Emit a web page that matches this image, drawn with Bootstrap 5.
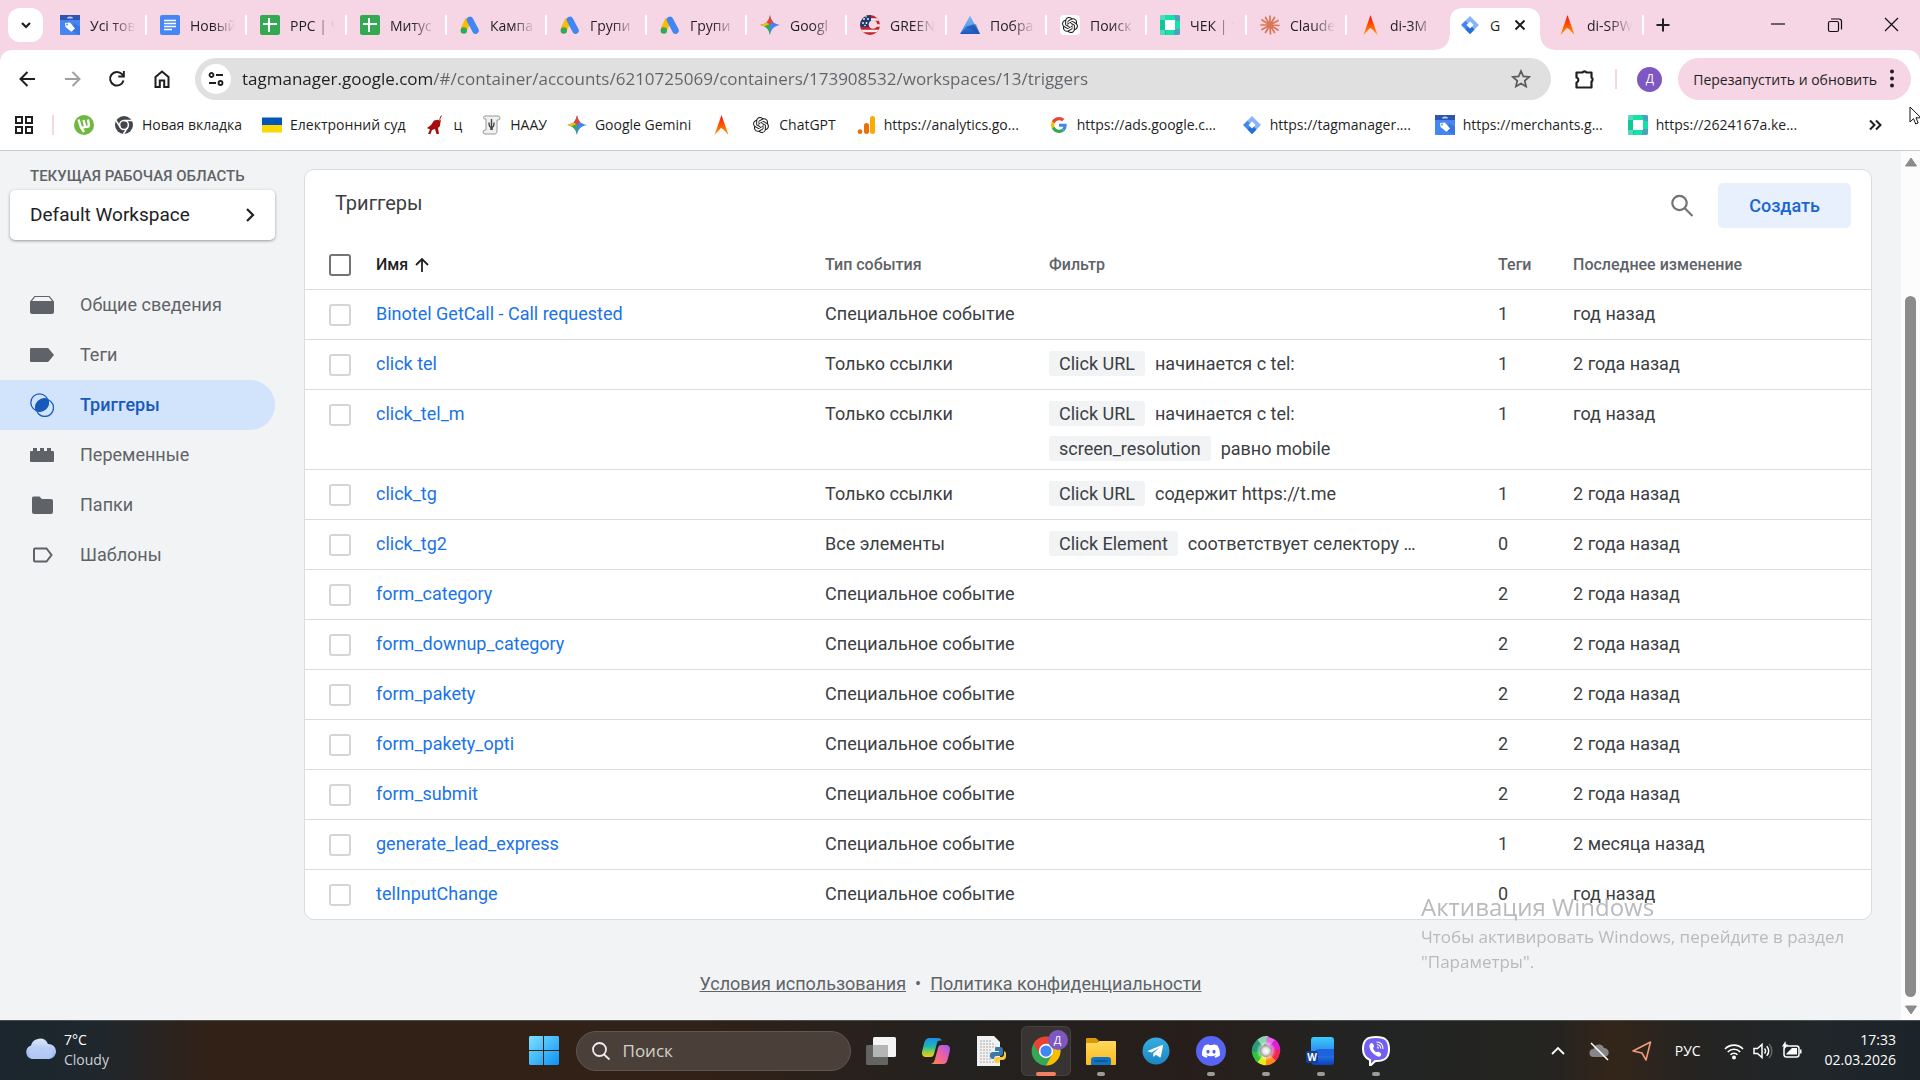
<!DOCTYPE html>
<html lang="ru">
<head>
<meta charset="utf-8">
<meta name="viewport" content="width=device-width, initial-scale=1">
<title>Google Tag Manager</title>
<link href="https://cdn.jsdelivr.net/npm/bootstrap@5.3.0/dist/css/bootstrap.min.css" rel="stylesheet">
<style>
  :root { --strip: #f6d5e4; --ink: #1f1f1f; --line: #dadce0; --muted: #5f6368; --link: #1a73e8; --gtm-bg: #f1f3f4; }
  body { font-family: Roboto, "Noto Sans", sans-serif; background: var(--gtm-bg); color: #3c4043; }
  svg { display: block; flex: none; }
  .ui-font { font-family: "Open Sans", "Noto Sans", sans-serif; }
  .i12 { width: 12px; height: 12px; } .i16 { width: 16px; height: 16px; } .i20 { width: 20px; height: 20px; }
  .i24 { width: 24px; height: 24px; } .i30 { width: 30px; height: 30px; }
  button.plain { background: none; border: 0; padding: 0; color: inherit; display: flex; align-items: center; justify-content: center; }

  /* tab strip */
  .tab-strip { background: var(--strip); height: 50px; padding-left: 8px; color: var(--ink); font-size: 14px; }
  button.tab-search { width: 35px; height: 34px; background: #fff; border-radius: 12px; margin-right: 7px; }
  .btab { width: 100px; height: 42px; padding: 0 15px 8px 10px; gap: 10px; position: relative; color: var(--ink); text-decoration: none; margin-top: 8px; min-width: 0; }
  .btab .cap { overflow: hidden; white-space: nowrap; flex: 1; -webkit-mask-image: linear-gradient(to right, #000 50%, transparent); mask-image: linear-gradient(to right, #000 50%, transparent); }
  .btab.sep::after { content: ""; position: absolute; right: 3px; top: 7px; width: 2px; height: 20px; background: #fff; border-radius: 1px; }
  .btab.current { width: 90px; background: #fff; border-radius: 12px 12px 0 0; margin-right: 7px; padding-right: 14px; }
  .btab.current::before, .btab.current::after { content: ""; position: absolute; bottom: 0; width: 14px; height: 14px; }
  .btab.current::before { left: -14px; background: radial-gradient(circle at 0 0, transparent 13px, #fff 14px); }
  .btab.current::after { right: -14px; background: radial-gradient(circle at 100% 0, transparent 13px, #fff 14px); }
  .btab.current .cap { -webkit-mask-image: none; mask-image: none; }
  .win-keys { gap: 37px; padding-right: 18px; }

  /* toolbar */
  .toolbar-wrap { background: var(--strip); }
  .toolbar { background: #fff; border-radius: 12px 12px 0 0; height: 58px; padding: 0 9px 0 17px; color: var(--ink); }
  .nav-keys { gap: 25px; margin-right: 23px; }
  .omnibox { background: #e0e0e0; border-radius: 21px; height: 42px; padding: 0 20px 0 6px; gap: 11px; }
  button.site-info { width: 30px; height: 30px; background: #fff; border-radius: 50%; }
  .url-box { border: 0; outline: 0; font-size: 17px; padding: 0; min-width: 0; color: var(--muted); -webkit-text-fill-color: transparent; background: linear-gradient(to right, #1f1f1f 190px, #5f6368 190px); -webkit-background-clip: text; background-clip: text; }
  .vline { width: 2px; height: 20px; background: var(--strip); }
  .avatar { width: 25px; height: 25px; border-radius: 50%; background: #7e57c2; color: #fff; font-size: 12px; }
  button.update-pill { background: var(--strip); border-radius: 21px; height: 42px; padding: 0 11px 0 15px; gap: 7px; font-size: 14px; }

  /* bookmarks */
  .bookmarks { background: #fff; height: 43px; padding: 0 37px 9px 14px; gap: 20px; border-bottom: 1px solid #c9cbcf; font-size: 14px; }
  .bm-lead { gap: 18px; }
  .bookmarks a { color: var(--ink); text-decoration: none; display: flex; align-items: center; gap: 8px; white-space: nowrap; }
  .bookmarks a.long span { width: 145px; }

  /* workspace side panel */
  .side { width: 304px; padding: 13px 29px 0 0; flex: none; }
  .side-label { font-size: 15px; font-weight: 500; color: var(--muted); line-height: 24px; padding-left: 30px; }
  button.ws-pick { width: 265px; height: 50px; margin: 2px 0 0 10px; padding: 0 18px 0 20px; background: #fff; border-radius: 5px; box-shadow: 0 1px 3px rgba(60,64,67,.5); color: #202124; font-size: 19px; justify-content: space-between; }
  .side-nav { margin-top: 40px; }
  .side-nav a { height: 50px; padding-left: 30px; gap: 26px; color: var(--muted); text-decoration: none; font-size: 18px; border-radius: 0 25px 25px 0; }
  .side-nav a span { padding-bottom: 2px; }
  .side-nav a.on { background: #d2e3fc; color: #185abc; font-weight: 500; }

  /* trigger table */
  .trig-card { border: 1px solid var(--line); border-radius: 10px; background: #fff; margin: 18px 29px 0 0; }
  .trig-head { height: 71px; padding: 0 20px 0 30px; }
  .trig-head h1 { font-size: 20px; font-weight: 400; color: #3c4043; margin: 0; padding-bottom: 6px; }
  button.make { background: #e8f0fe; color: #1967d2; border: 0; border-radius: 5px; width: 133px; height: 45px; font-size: 18px; font-weight: 500; }
  .trig-table { table-layout: fixed; width: 100%; font-size: 18px; }
  .trig-table th { font-size: 16px; font-weight: 500; color: var(--muted); height: 48px; padding: 0; vertical-align: middle; }
  .trig-table th.lead-col { color: #202124; }
  .sort-cap { gap: 6px; }
  .trig-table td { border-top: 1px solid var(--line); height: 50px; padding: 11px 0 8px; vertical-align: top; line-height: 25px; white-space: nowrap; }
  .trig-table td a { color: var(--link); text-decoration: none; }
  .c-box { width: 71px; } .c-type { width: 224px; } .c-tags { width: 75px; } .c-last { width: 298px; }
  .tick { appearance: none; display: block; width: 22px; height: 22px; border: 2px solid #d5d5d5; border-radius: 3px; background: #fff; margin: 3px 0 0 24px; }
  th .tick { border-color: #737373; margin-top: 0; }
  .cond { display: flex; gap: 10px; }
  .cond + .cond { margin-top: 10px; }
  .chip { background: var(--gtm-bg); border-radius: 3px; padding: 0 10px; }
  .legal { margin-top: 50px; font-size: 18px; color: var(--muted); gap: 9px; }
  .legal a { color: var(--muted); }
  .scroller { width: 19px; background: #fcfcfc; flex: none; padding: 6px 0 5px; }
  .thumb { width: 11px; border-radius: 6px; background: #8b8b8b; margin-top: 129px; margin-bottom: 8px; }

  /* overlays */
  .activation { position: fixed; right: 59px; bottom: 106px; width: 440px; color: #b9babb; font-size: 17px; line-height: 25px; white-space: nowrap; pointer-events: none; }
  .activation .big { font-size: 24px; line-height: 34px; }
  .pointer { position: fixed; left: 1909px; top: 106px; }

  /* taskbar */
  .taskbar { height: 60px; color: #fff; border-top: 1px solid #4a4f50; font-size: 14px; line-height: 20px;
    background: linear-gradient(to right, #1b262e 0, #1f272d 5%, #322116 11%, #322116 36%, #2a211c 43%, #23211f 50%, #271e1b 62%, #222524 72%, #252420 81%, #342519 84%, #252422 88%, #20262a 95%, #1c242a 100%); }
  .tb-side { flex: 1 1 0; }
  .two-line { padding-bottom: 2px; }
  .wx { color: #cdd0d2; }
  .tray { gap: 23px; padding-right: 24px; }
  .tray-icons { gap: 9px; }
  .tb-app { width: 55px; height: 58px; position: relative; }
  .tb-app.run::after { content: ""; position: absolute; bottom: 4px; width: 8px; height: 4px; border-radius: 2px; background: #9b9b9b; }
  .tb-app.front::before { content: ""; position: absolute; width: 50px; height: 50px; border-radius: 6px; background: rgba(255,255,255,.09); border: 1px solid rgba(255,255,255,.07); }
  .tb-app.front::after { width: 20px; background: #f28163; }
  .tb-app svg { position: relative; }
  .app-badge { position: absolute; right: 6px; top: 8px; width: 20px; height: 20px; font-size: 11px; background: #7e57c2; }
  .tb-search { width: 275px; height: 40px; border-radius: 20px; background: #4b4039; border: 1px solid #62564f; padding-left: 14px; gap: 12px; margin: 0 3px 0 4px; }
  .tb-search input { background: none; border: 0; outline: 0; color: #ddd; font-size: 17px; width: 200px; padding: 0; }
  .tb-search input::placeholder { color: #d5d0cd; opacity: 1; }
</style>
<script src="https://cdn.jsdelivr.net/npm/bootstrap@5.3.0/dist/js/bootstrap.bundle.min.js"></script>
</head>
<body class="vh-100 d-flex flex-column overflow-hidden">

<svg width="0" height="0" class="position-absolute" aria-hidden="true">
  <defs>
    <linearGradient id="gA" x1="0" y1="1" x2="0" y2="0"><stop offset="0" stop-color="#ff9a00"/><stop offset=".45" stop-color="#ff5a00"/><stop offset="1" stop-color="#fb1010"/></linearGradient>
    <linearGradient id="gTri" x1="0" y1="0" x2="0" y2="1"><stop offset="0" stop-color="#5aa7ee"/><stop offset="1" stop-color="#1b55c0"/></linearGradient>
    <linearGradient id="gWin" x1="0" y1="0" x2="1" y2="1"><stop offset="0" stop-color="#7fe0ff"/><stop offset="1" stop-color="#0a92f5"/></linearGradient>
    <linearGradient id="gCloud" x1="0" y1="0" x2="0" y2="1"><stop offset="0" stop-color="#dbe7fb"/><stop offset="1" stop-color="#8fb0ee"/></linearGradient>
    <linearGradient id="gCop1" x1="0" y1="0" x2="0" y2="1"><stop offset="0" stop-color="#1b8fe8"/><stop offset=".45" stop-color="#20b6b0"/><stop offset=".75" stop-color="#9bd03c"/><stop offset="1" stop-color="#f7c51c"/></linearGradient>
    <linearGradient id="gCop2" x1="1" y1="0" x2="0" y2="1"><stop offset="0" stop-color="#9a5df5"/><stop offset=".5" stop-color="#f0609c"/><stop offset="1" stop-color="#fb8a4e"/></linearGradient>
    <linearGradient id="gFold" x1="0" y1="0" x2="0" y2="1"><stop offset="0" stop-color="#ffd85e"/><stop offset="1" stop-color="#fbb91c"/></linearGradient>
    <linearGradient id="gTg" x1="0" y1="0" x2="0" y2="1"><stop offset="0" stop-color="#35aee2"/><stop offset="1" stop-color="#1b86c4"/></linearGradient>
    <linearGradient id="gWord" x1="0" y1="0" x2="0" y2="1"><stop offset="0" stop-color="#3ccbfb"/><stop offset=".5" stop-color="#2f8ff0"/><stop offset="1" stop-color="#0c3fc0"/></linearGradient>
    <radialGradient id="gGlow"><stop offset="0" stop-color="#fff"/><stop offset=".3" stop-color="#fff" stop-opacity=".9"/><stop offset="1" stop-color="#fff" stop-opacity="0"/></radialGradient>
    <clipPath id="cStar"><path d="M10 0C11 6 14 9 20 10C14 11 11 14 10 20C9 14 6 11 0 10C6 9 9 6 10 0Z"/></clipPath>
    <clipPath id="cDisc"><circle cx="10" cy="10" r="10"/></clipPath>
  </defs>
  <symbol id="merchant" viewBox="0 0 20 20"><rect width="20" height="20" rx="1" fill="#4486f4"/><rect width="20" height="5" fill="#3154b0"/><path d="M7 3.500a3 2 0 0 1 6 0z" fill="#b9cdf8"/><path d="M12 16l8 4v-8l-6-4z" fill="#3a74e0"/><path d="M5 8l5-.6 5 6-3.600 3.400L5.500 12z" fill="#fff"/><circle cx="7" cy="9.500" r=".9" fill="#4486f4"/></symbol>
  <symbol id="docs" viewBox="0 0 20 20"><rect width="20" height="20" rx="2" fill="#4486f4"/><path d="M4 5.500h12M4 8.500h12M4 11.500h12M4 14.500h8" stroke="#fff" stroke-width="1.600"/></symbol>
  <symbol id="sheets" viewBox="0 0 20 20"><rect width="20" height="20" rx="2" fill="#34a853"/><path d="M9 3v14M3 9h14" stroke="#fff" stroke-width="2"/></symbol>
  <symbol id="ads" viewBox="0 0 20 20"><path d="M8.500 4.500L4 14" stroke="#fbbc04" stroke-width="6.500"/><path d="M10 5l5.500 10.500" stroke="#4285f4" stroke-width="6.600" stroke-linecap="round"/><circle cx="3.800" cy="15.500" r="3.200" fill="#34a853"/></symbol>
  <symbol id="gem" viewBox="0 0 20 20"><g clip-path="url(#cStar)"><rect width="20" height="20" fill="#4285f4"/><path d="M0 0h20L10 10z" fill="#ea4335"/><path d="M0 2l10 8L0 14z" fill="#fbbc04"/><path d="M0 13l10-4v11H0z" fill="#34a853"/></g></symbol>
  <symbol id="usa" viewBox="0 0 20 20"><g clip-path="url(#cDisc)"><rect width="20" height="20" fill="#c8202f"/><path d="M0 4.500h20M0 10.500h20M0 16h20" stroke="#f5ecec" stroke-width="2.600"/><rect width="11" height="12" fill="#1e3a6e"/><circle cx="13" cy="9.500" r="4.300" fill="#f6d5e4"/></g><g fill="#fff"><circle cx="4" cy="4" r=".9"/><circle cx="8" cy="4" r=".9"/><circle cx="3" cy="8" r=".9"/><circle cx="6.500" cy="8" r=".9"/><circle cx="6" cy="1.800" r=".7"/><circle cx="5" cy="10.500" r=".8"/></g></symbol>
  <symbol id="tri" viewBox="0 0 20 20"><path d="M10 1l10 18H0z" fill="url(#gTri)"/><path d="M10 1l4.500 8-8 2.500L0 19z" fill="#7fc1f6" opacity=".55"/><path d="M6 12l10-3 4 10z" fill="#1348ab" opacity=".5"/></symbol>
  <symbol id="knot" viewBox="0 0 24 24"><path fill="#222" d="M22.2819 9.8211a5.9847 5.9847 0 0 0-.5157-4.9108 6.0462 6.0462 0 0 0-6.5098-2.9A6.0651 6.0651 0 0 0 4.9807 4.1818a5.9847 5.9847 0 0 0-3.9977 2.9 6.0462 6.0462 0 0 0 .7427 7.0966 5.98 5.98 0 0 0 .511 4.9107 6.051 6.051 0 0 0 6.5146 2.9001A5.9847 5.9847 0 0 0 13.2599 24a6.0557 6.0557 0 0 0 5.7718-4.2058 5.9894 5.9894 0 0 0 3.9977-2.9001 6.0557 6.0557 0 0 0-.7475-7.0729zm-9.022 12.6081a4.4755 4.4755 0 0 1-2.8764-1.0408l.1419-.0804 4.7783-2.7582a.7948.7948 0 0 0 .3927-.6813v-6.7369l2.02 1.1686a.071.071 0 0 1 .038.052v5.5826a4.504 4.504 0 0 1-4.4945 4.4944zm-9.6607-4.1254a4.4708 4.4708 0 0 1-.5346-3.0137l.142.0852 4.783 2.7582a.7712.7712 0 0 0 .7806 0l5.8428-3.3685v2.3324a.0804.0804 0 0 1-.0332.0615L9.74 19.9502a4.4992 4.4992 0 0 1-6.1408-1.6464zM2.3408 7.8956a4.485 4.485 0 0 1 2.3655-1.9728V11.6a.7664.7664 0 0 0 .3879.6765l5.8144 3.3543-2.0201 1.1685a.0757.0757 0 0 1-.071 0l-4.8303-2.7865A4.504 4.504 0 0 1 2.3408 7.872zm16.5963 3.8558L13.1038 8.364 15.1192 7.2a.0757.0757 0 0 1 .071 0l4.8303 2.7913a4.4944 4.4944 0 0 1-.6765 8.1042v-5.6772a.79.79 0 0 0-.407-.667zm2.0107-3.0231l-.142-.0852-4.7735-2.7818a.7759.7759 0 0 0-.7854 0L9.409 9.2297V6.8974a.0662.0662 0 0 1 .0284-.0615l4.8303-2.7866a4.4992 4.4992 0 0 1 6.6802 4.66zM8.3065 12.863l-2.02-1.1638a.0804.0804 0 0 1-.038-.0567V6.0742a4.4992 4.4992 0 0 1 7.3757-3.4537l-.142.0805L8.704 5.459a.7948.7948 0 0 0-.3927.6813zm1.0976-2.3654l2.602-1.4998 2.6069 1.4998v2.9994l-2.5974 1.4997-2.6067-1.4997Z"/></symbol>
  <symbol id="keto" viewBox="0 0 20 20"><rect width="20" height="20" rx="2" fill="#13e3a4"/><path d="M0 14v4a2 2 0 0 0 2 2h4V6l-6-2z" fill="#10c79a"/><path d="M14 0h4a2 2 0 0 1 2 2v4H16zM14 14h6v4a2 2 0 0 1-2 2h-4z" fill="#4f9fc0"/><path d="M0 2a2 2 0 0 1 2-2h3v5H0zM0 15h5v5H2a2 2 0 0 1-2-2z" fill="#55d8c2"/><rect x="5" y="5" width="10" height="10" fill="#fff"/></symbol>
  <symbol id="claude" viewBox="0 0 20 20"><path stroke="#d97757" stroke-width="1.700" stroke-linecap="round" d="M10 10V1M10 10l4.500-7.500M10 10l8-4.500M10 10l9 .5M10 10l8 5M10 10l4.500 7.500M10 10l.5 9M10 10l-4.500 7.500M10 10l-8 4.500M10 10H1M10 10L2 5M10 10L5.500 2.500"/></symbol>
  <symbol id="arrowA" viewBox="0 0 20 20"><path d="M10.500 0L17.500 20l-5-5.500-2.500-1.500-6.500 7z" fill="url(#gA)"/></symbol>
  <symbol id="gtm" viewBox="0 0 20 20"><path d="M10 1l9 9-4.500 4.500-9-9z" fill="#8ab4f8"/><path d="M5.500 5.500L1 10l9 9 4.500-4.500L10 10z" fill="#4285f4"/><path d="M5.500 14.500L10 19l4.500-4.500L10 10z" fill="#246fdb"/><path d="M10 6.500l3.500 3.500-3.500 3.500L6.500 10z" fill="#fff"/></symbol>
  <symbol id="gLogo" viewBox="0 0 48 48"><path fill="#EA4335" d="M24 9.500c3.540 0 6.710 1.220 9.210 3.600l6.850-6.850C35.900 2.380 30.470 0 24 0 14.620 0 6.510 5.380 2.560 13.220l7.980 6.190C12.430 13.720 17.740 9.500 24 9.500z"/><path fill="#4285F4" d="M46.980 24.550c0-1.570-.15-3.090-.38-4.550H24v9.020h12.940c-.58 2.960-2.260 5.480-4.780 7.180l7.730 6c4.510-4.180 7.090-10.360 7.090-17.650z"/><path fill="#FBBC05" d="M10.530 28.590c-.48-1.450-.76-2.990-.76-4.590s.27-3.140.76-4.590l-7.980-6.190C.92 16.460 0 20.120 0 24c0 3.880.92 7.540 2.560 10.780l7.970-6.190z"/><path fill="#34A853" d="M24 48c6.480 0 11.930-2.130 15.890-5.810l-7.730-6c-2.150 1.450-4.920 2.300-8.160 2.300-6.260 0-11.570-4.220-13.470-9.910l-7.980 6.190C6.510 42.620 14.620 48 24 48z"/></symbol>
</svg>

<header class="ui-font">
  <div class="tab-strip d-flex align-items-center">
    <button class="plain tab-search" aria-label="Поиск вкладок"><svg class="i12" viewBox="0 0 12 12"><path d="M2 4l4 4 4-4" fill="none" stroke="#1f1f1f" stroke-width="2.200"/></svg></button>
    <nav class="d-flex" aria-label="Вкладки">
      <a href="#" class="btab sep d-flex align-items-center"><svg class="i20"><use href="#merchant"/></svg><span class="cap">Усі тов</span></a>
      <a href="#" class="btab sep d-flex align-items-center"><svg class="i20"><use href="#docs"/></svg><span class="cap">Новый</span></a>
      <a href="#" class="btab sep d-flex align-items-center"><svg class="i20"><use href="#sheets"/></svg><span class="cap">PPC | Ч</span></a>
      <a href="#" class="btab sep d-flex align-items-center"><svg class="i20"><use href="#sheets"/></svg><span class="cap">Митус</span></a>
      <a href="#" class="btab sep d-flex align-items-center"><svg class="i20"><use href="#ads"/></svg><span class="cap">Кампа</span></a>
      <a href="#" class="btab sep d-flex align-items-center"><svg class="i20"><use href="#ads"/></svg><span class="cap">Групи</span></a>
      <a href="#" class="btab sep d-flex align-items-center"><svg class="i20"><use href="#ads"/></svg><span class="cap">Групи</span></a>
      <a href="#" class="btab sep d-flex align-items-center"><svg class="i20"><use href="#gem"/></svg><span class="cap">Googl</span></a>
      <a href="#" class="btab sep d-flex align-items-center"><svg class="i20"><use href="#usa"/></svg><span class="cap">GREEN</span></a>
      <a href="#" class="btab sep d-flex align-items-center"><svg class="i20"><use href="#tri"/></svg><span class="cap">Побра</span></a>
      <a href="#" class="btab sep d-flex align-items-center"><svg class="i20" viewBox="0 0 20 20"><rect width="20" height="20" rx="4" fill="#fff"/><use href="#knot" x="2" y="2" width="16" height="16"/></svg><span class="cap">Поиск</span></a>
      <a href="#" class="btab sep d-flex align-items-center"><svg class="i20"><use href="#keto"/></svg><span class="cap">ЧЕК | 1</span></a>
      <a href="#" class="btab sep d-flex align-items-center"><svg class="i20"><use href="#claude"/></svg><span class="cap">Claude</span></a>
      <a href="#" class="btab d-flex align-items-center"><svg class="i20"><use href="#arrowA"/></svg><span class="cap">di-3M</span></a>
      <a href="#" class="btab current d-flex align-items-center" aria-current="page"><svg class="i20"><use href="#gtm"/></svg><span class="cap">G</span><svg class="i12" viewBox="0 0 12 12"><path d="M1.500 1.500l9 9M10.500 1.500l-9 9" stroke="#1f1f1f" stroke-width="2"/></svg></a>
      <a href="#" class="btab sep d-flex align-items-center"><svg class="i20"><use href="#arrowA"/></svg><span class="cap">di-SPW</span></a>
    </nav>
    <button class="plain ms-2" aria-label="Новая вкладка"><svg class="i16" viewBox="0 0 16 16"><path d="M8 1.500v13M1.500 8h13" stroke="#1f1f1f" stroke-width="2"/></svg></button>
    <div class="win-keys d-flex ms-auto">
      <button class="plain" aria-label="Свернуть"><svg class="i20" viewBox="0 0 20 20"><path d="M3 9h14" stroke="#111" stroke-width="1.200"/></svg></button>
      <button class="plain" aria-label="Развернуть"><svg class="i20" viewBox="0 0 20 20" fill="none" stroke="#111" stroke-width="1.200"><rect x="3.500" y="6.500" width="10" height="10" rx="1.500"/><path d="M6 4h8a2.500 2.500 0 0 1 2.500 2.500v8"/></svg></button>
      <button class="plain" aria-label="Закрыть"><svg class="i20" viewBox="0 0 20 20"><path d="M3 3l13 13M16 3L3 16" stroke="#111" stroke-width="1.200"/></svg></button>
    </div>
  </div>

  <div class="toolbar-wrap">
    <div class="toolbar d-flex align-items-center">
      <div class="nav-keys d-flex">
        <button class="plain" aria-label="Назад"><svg class="i20" viewBox="0 0 20 20"><path d="M18 10H4M10.500 3L3.500 10l7 7" fill="none" stroke="#1f1f1f" stroke-width="2"/></svg></button>
        <button class="plain" aria-label="Вперёд"><svg class="i20" viewBox="0 0 20 20"><path d="M3 10h14M10.500 3l7 7-7 7" fill="none" stroke="#a0a0a0" stroke-width="2"/></svg></button>
        <button class="plain" aria-label="Обновить"><svg class="i20" viewBox="0 0 20 20"><path d="M16.500 11.500A6.800 6.800 0 1 1 15 5.200L17 7.500" fill="none" stroke="#1f1f1f" stroke-width="2"/><path d="M17.800 2v6.500h-6.500V6.600h4.600V2z" fill="#1f1f1f"/></svg></button>
        <button class="plain" aria-label="Главная"><svg class="i20" viewBox="0 0 20 20"><path d="M3.500 18V8L10 2.500 16.500 8v10h-4.300v-6.500H7.800V18z" fill="none" stroke="#1f1f1f" stroke-width="2"/></svg></button>
      </div>
      <div class="omnibox d-flex align-items-center flex-grow-1">
        <button class="plain site-info" aria-label="Сведения о сайте"><svg class="i16" viewBox="0 0 16 16" fill="none" stroke="#1f1f1f" stroke-width="1.800"><circle cx="3.500" cy="4" r="2"/><path d="M8 4h7M1 12h7"/><circle cx="12.500" cy="12" r="2"/></svg></button>
        <input class="url-box flex-grow-1 ui-font" type="text" aria-label="Адресная строка" value="tagmanager.google.com/#/container/accounts/6210725069/containers/173908532/workspaces/13/triggers">
        <button class="plain" aria-label="Добавить в закладки"><svg class="i20" viewBox="0 0 20 20"><path d="M10 2l2.300 5.400 5.900.5-4.500 3.900 1.400 5.700-5.100-3-5.100 3 1.400-5.700L1.800 7.900l5.900-.5z" fill="none" stroke="#5a5a5a" stroke-width="1.700"/></svg></button>
      </div>
      <div class="d-flex align-items-center ms-4 gap-3">
        <button class="plain" aria-label="Расширения"><svg class="i20" viewBox="0 0 20 20"><path d="M1.500 3.500h6a2.200 1.800 0 0 1 4 0h5v5a1.900 2.200 0 0 1 0 4v6h-15v-5a2.600 2.600 0 0 0 0-5z" fill="none" stroke="#1f1f1f" stroke-width="2.200" stroke-linejoin="round"/></svg></button>
        <span class="vline ms-1"></span>
        <span class="avatar d-flex align-items-center justify-content-center ms-1">Д</span>
        <button class="plain update-pill">Перезапустить и обновить <svg width="16" height="24" viewBox="0 0 16 24" fill="#1f1f1f"><circle cx="8" cy="4.500" r="2"/><circle cx="8" cy="11.500" r="2"/><circle cx="8" cy="18.500" r="2"/></svg></button>
      </div>
    </div>
  </div>

  <nav class="bookmarks d-flex align-items-center" aria-label="Закладки">
    <div class="bm-lead d-flex align-items-center">
      <button class="plain" aria-label="Все закладки"><svg class="i20" viewBox="0 0 20 20" fill="none" stroke="#1f1f1f" stroke-width="2"><rect x="2" y="2" width="6" height="6"/><rect x="12" y="2" width="6" height="6"/><rect x="2" y="12" width="6" height="6"/><rect x="12" y="12" width="6" height="6"/></svg></button>
      <span class="vline"></span>
    </div>
    <a href="#" aria-label="uTorrent"><svg class="i20" viewBox="0 0 20 20"><circle cx="10" cy="10" r="10" fill="#6fb83f"/><path d="M4.500 4.500l2 6.500c.6 2 4 2.200 4.500 0l-1.500-6M11 11c.8 1.600 3.500 1 4-.5l-1-6M6.500 11.500L10 17" fill="none" stroke="#fff" stroke-width="2.400"/></svg></a>
    <a href="#"><svg class="i20" viewBox="0 0 20 20"><circle cx="10" cy="10" r="9" fill="#43474b"/><circle cx="10" cy="10" r="4.400" fill="none" stroke="#fff" stroke-width="1.500"/><path d="M10 5.600h8.300M6.200 12.200L2 5.500M13.800 12.200L9.500 19" stroke="#fff" stroke-width="1.500"/></svg><span>Новая вкладка</span></a>
    <a href="#"><svg class="i20" viewBox="0 0 20 20"><path d="M0 2.500h20V10H0z" fill="#0057b8"/><path d="M0 10h20v7.500H0z" fill="#ffd700"/></svg><span>Електронний суд</span></a>
    <a href="#"><svg class="i20" viewBox="0 0 20 20"><path d="M15.500 6.500C14 4 15.500 2.500 16.500 .5" fill="none" stroke="#a80d0d"/><path d="M15.500 6l-.5 5-2 2 1 6h-2.500l-1.500-5-3 1-1.500 4H3l2-4.500L2 13l4-3 3-4.500 4-.8z" fill="#a80d0d"/></svg><span>ц</span></a>
    <a href="#"><svg class="i20" viewBox="0 0 20 20"><path d="M3 1h13a2 2 0 0 1 0 4h-1v11c0 2-1 3-2 3H3a2 2 0 0 1 0-4h1V4H3a1.500 1.500 0 0 1 0-3z" fill="#f0f0f0" stroke="#999"/><path d="M9.500 4v11M7 7.500c0 4 1 5 2.500 5s2.500-1 2.500-5M8 14h3" stroke="#444" fill="none" stroke-width="1.400"/></svg><span>НААУ</span></a>
    <a href="#"><svg class="i20"><use href="#gem"/></svg><span>Google Gemini</span></a>
    <a href="#" aria-label="A"><svg class="i20"><use href="#arrowA"/></svg></a>
    <a href="#"><svg class="i20" viewBox="0 0 20 20"><use href="#knot" x="2" y="2" width="16" height="16"/></svg><span>ChatGPT</span></a>
    <a href="#" class="long"><svg class="i20" viewBox="0 0 20 20"><rect x="14" y="1" width="5" height="18" rx="2.500" fill="#f9ab00"/><rect x="8" y="8" width="5" height="11" rx="2.500" fill="#e8710a"/><circle cx="4" cy="16.700" r="2.400" fill="#e8710a"/></svg><span>https://analytics.go...</span></a>
    <a href="#" class="long"><svg class="i20" viewBox="0 0 20 20"><use href="#gLogo" x="2" y="2" width="16" height="16"/></svg><span>https://ads.google.c...</span></a>
    <a href="#" class="long"><svg class="i20"><use href="#gtm"/></svg><span>https://tagmanager....</span></a>
    <a href="#" class="long"><svg class="i20"><use href="#merchant"/></svg><span>https://merchants.g...</span></a>
    <a href="#" class="long"><svg class="i20"><use href="#keto"/></svg><span>https://2624167a.ke...</span></a>
    <button class="plain ms-auto" aria-label="Ещё закладки"><svg class="i16" viewBox="0 0 16 16"><path d="M3 3.500L7.500 8 3 12.500M9 3.500L13.500 8 9 12.500" fill="none" stroke="#1f1f1f" stroke-width="2"/></svg></button>
  </nav>
</header>

<div class="d-flex flex-grow-1 overflow-hidden">
  <div class="flex-grow-1">
    <div class="d-flex">
      <aside class="side">
        <div class="side-label">ТЕКУЩАЯ РАБОЧАЯ ОБЛАСТЬ</div>
        <button class="plain ws-pick"><span>Default Workspace</span><svg width="12" height="16" viewBox="0 0 12 16"><path d="M2 2l6 6-6 6" fill="none" stroke="#202124" stroke-width="2.200"/></svg></button>
        <nav class="side-nav d-flex flex-column" aria-label="Разделы">
          <a href="#" class="d-flex align-items-center"><svg class="i24" viewBox="0 0 24 24"><path d="M0 8.500L4.500 3h15L24 8.500V19a2 2 0 0 1-2 2H2a2 2 0 0 1-2-2z" fill="currentColor"/><path d="M2 8l3.200-4h13.600L22 8z" fill="#f1f3f4"/></svg><span>Общие сведения</span></a>
          <a href="#" class="d-flex align-items-center"><svg class="i24" viewBox="0 0 24 24"><path d="M1 5h16.500a2 2 0 0 1 1.500 1l5 6-5 6a2 2 0 0 1-1.500 1H1a1 1 0 0 1-1-1V6a1 1 0 0 1 1-1z" fill="currentColor"/></svg><span>Теги</span></a>
          <a href="#" class="on d-flex align-items-center"><svg class="i24" viewBox="0 0 24 24" fill="none" stroke="currentColor" stroke-width="1.300"><circle cx="9.500" cy="9.500" r="8.700"/><circle cx="14.800" cy="14.800" r="8.700"/><path d="M6.200 17.500a8.700 8.700 0 0 1 11.600-11 8.700 8.700 0 0 1-11.600 11z" fill="currentColor"/></svg><span>Триггеры</span></a>
          <a href="#" class="d-flex align-items-center"><svg class="i24" viewBox="0 0 24 24"><path d="M0 9a1 1 0 0 1 1-1h2V5h4v3h3V5h4v3h3V5h4v3h2a1 1 0 0 1 1 1v9a1 1 0 0 1-1 1H1a1 1 0 0 1-1-1z" fill="currentColor"/></svg><span>Переменные</span></a>
          <a href="#" class="d-flex align-items-center"><svg class="i24" viewBox="0 0 24 24"><path d="M3.500 3.500h6L12 6h9a2 2 0 0 1 2 2v11a2 2 0 0 1-2 2H4a2 2 0 0 1-2-2V5a1.500 1.500 0 0 1 1.500-1.500z" fill="currentColor"/></svg><span>Папки</span></a>
          <a href="#" class="d-flex align-items-center"><svg class="i24" viewBox="0 0 24 24"><path d="M5 5.500h11.500L21.500 12l-5 6.500H5a1 1 0 0 1-1-1v-11a1 1 0 0 1 1-1z" fill="none" stroke="currentColor" stroke-width="2"/></svg><span>Шаблоны</span></a>
        </nav>
      </aside>

      <main class="flex-grow-1">
        <section class="trig-card">
          <div class="trig-head d-flex align-items-center">
            <h1>Триггеры</h1>
            <button class="plain ms-auto me-4" aria-label="Поиск"><svg class="i24" viewBox="0 0 24 24" fill="none" stroke="#737373" stroke-width="2.200"><circle cx="9.500" cy="9" r="7.200"/><path d="M14.500 14l8 8"/></svg></button>
            <button class="make">Создать</button>
          </div>
          <table class="trig-table">
            <colgroup><col class="c-box"><col><col class="c-type"><col><col class="c-tags"><col class="c-last"></colgroup>
            <thead><tr>
              <th><input type="checkbox" class="tick" aria-label="Выбрать все"></th>
              <th class="lead-col"><span class="sort-cap d-flex align-items-center">Имя <svg class="i16" viewBox="0 0 16 16"><path d="M8 15V2M2 8l6-6 6 6" fill="none" stroke="#202124" stroke-width="1.800"/></svg></span></th>
              <th>Тип события</th><th>Фильтр</th><th>Теги</th><th>Последнее изменение</th>
            </tr></thead>
            <tbody>
              <tr><td><input type="checkbox" class="tick" aria-label="Binotel GetCall - Call requested"></td><td><a href="#">Binotel GetCall - Call requested</a></td><td>Специальное событие</td><td></td><td>1</td><td>год назад</td></tr>
              <tr><td><input type="checkbox" class="tick" aria-label="click tel"></td><td><a href="#">click tel</a></td><td>Только ссылки</td><td><div class="cond"><span class="chip">Click URL</span><span>начинается с tel:</span></div></td><td>1</td><td>2 года назад</td></tr>
              <tr><td><input type="checkbox" class="tick" aria-label="click_tel_m"></td><td><a href="#">click_tel_m</a></td><td>Только ссылки</td><td><div class="cond"><span class="chip">Click URL</span><span>начинается с tel:</span></div><div class="cond"><span class="chip">screen_resolution</span><span>равно mobile</span></div></td><td>1</td><td>год назад</td></tr>
              <tr><td><input type="checkbox" class="tick" aria-label="click_tg"></td><td><a href="#">click_tg</a></td><td>Только ссылки</td><td><div class="cond"><span class="chip">Click URL</span><span>содержит https://t.me</span></div></td><td>1</td><td>2 года назад</td></tr>
              <tr><td><input type="checkbox" class="tick" aria-label="click_tg2"></td><td><a href="#">click_tg2</a></td><td>Все элементы</td><td><div class="cond"><span class="chip">Click Element</span><span>соответствует селектору …</span></div></td><td>0</td><td>2 года назад</td></tr>
              <tr><td><input type="checkbox" class="tick" aria-label="form_category"></td><td><a href="#">form_category</a></td><td>Специальное событие</td><td></td><td>2</td><td>2 года назад</td></tr>
              <tr><td><input type="checkbox" class="tick" aria-label="form_downup_category"></td><td><a href="#">form_downup_category</a></td><td>Специальное событие</td><td></td><td>2</td><td>2 года назад</td></tr>
              <tr><td><input type="checkbox" class="tick" aria-label="form_pakety"></td><td><a href="#">form_pakety</a></td><td>Специальное событие</td><td></td><td>2</td><td>2 года назад</td></tr>
              <tr><td><input type="checkbox" class="tick" aria-label="form_pakety_opti"></td><td><a href="#">form_pakety_opti</a></td><td>Специальное событие</td><td></td><td>2</td><td>2 года назад</td></tr>
              <tr><td><input type="checkbox" class="tick" aria-label="form_submit"></td><td><a href="#">form_submit</a></td><td>Специальное событие</td><td></td><td>2</td><td>2 года назад</td></tr>
              <tr><td><input type="checkbox" class="tick" aria-label="generate_lead_express"></td><td><a href="#">generate_lead_express</a></td><td>Специальное событие</td><td></td><td>1</td><td>2 месяца назад</td></tr>
              <tr><td><input type="checkbox" class="tick" aria-label="telInputChange"></td><td><a href="#">telInputChange</a></td><td>Специальное событие</td><td></td><td>0</td><td>год назад</td></tr>
            </tbody>
          </table>
        </section>
      </main>
    </div>
    <footer class="legal d-flex justify-content-center"><a href="#">Условия использования</a><span>•</span><a href="#">Политика конфиденциальности</a></footer>
  </div>

  <div class="scroller d-flex flex-column align-items-center" aria-hidden="true">
    <svg width="12" height="10" viewBox="0 0 12 10"><path d="M6 1l5.500 8H.5z" fill="#8b8b8b" stroke="#8b8b8b" stroke-linejoin="round"/></svg>
    <div class="thumb flex-grow-1"></div>
    <svg width="12" height="10" viewBox="0 0 12 10"><path d="M6 9L.5 1h11z" fill="#8b8b8b" stroke="#8b8b8b" stroke-linejoin="round"/></svg>
  </div>
</div>

<footer class="taskbar ui-font d-flex align-items-center">
  <div class="tb-side d-flex align-items-center gap-2 ps-4">
    <svg width="32" height="26" viewBox="0 0 32 26"><path d="M8 21a7 7 0 0 1-1-13.500A9 9 0 0 1 24 6a7.500 7.500 0 0 1 1 15z" fill="url(#gCloud)"/><path d="M8 21a6 6 0 0 1 2-11c3-1 6 1 7 3 3-4 10-3 12 1 0 4-2 7-5 7z" fill="#bcd0f6" opacity=".7"/></svg>
    <div class="two-line">7°C<br><span class="wx">Cloudy</span></div>
  </div>
  <div class="d-flex align-items-center">
    <a href="#" class="tb-app d-flex align-items-center justify-content-center" aria-label="Пуск"><svg class="i30" viewBox="0 0 30 30" fill="url(#gWin)"><path d="M1 0h13v14H0V1zM15 0h14l1 1v13H15zM0 15h14v14H1l-1-1zM15 15h15v13l-1 1H15z"/></svg></a>
    <label class="tb-search d-flex align-items-center"><svg class="i20" viewBox="0 0 20 20" fill="none" stroke="#eee" stroke-width="1.800"><circle cx="8.500" cy="8.500" r="6.500"/><path d="M13 13.500l5.500 5"/></svg><input type="search" placeholder="Поиск" class="ui-font" aria-label="Поиск"></label>
    <a href="#" class="tb-app d-flex align-items-center justify-content-center" aria-label="Представление задач"><svg class="i30" viewBox="0 0 30 30"><rect x="7" y="1" width="23" height="20" rx="1.500" fill="#f4f4f4"/><rect x="0" y="9" width="22" height="20" rx="1.500" fill="#707070" opacity=".85"/><path d="M7 9h15v12H7z" fill="#b5b5b5"/></svg></a>
    <a href="#" class="tb-app d-flex align-items-center justify-content-center" aria-label="Copilot"><svg class="i30" viewBox="0 0 30 30"><path d="M13 28h9c3 0 4-2 4.800-5l2-8c.8-4-.8-6-4.300-6h-4c-2 0-3 1-3.500 3l-3 11c-.6 2.500-1.500 4-4 5z" fill="url(#gCop2)"/><path d="M17 2H8.500C5.500 2 4 4 3.200 7l-2 8c-.8 4 .8 6 4.300 6h4c2 0 3-1 3.500-3l3-11c.6-1.800 1.500-2.500 3.500-2.500h1.500C20 3 19 2 17 2z" fill="url(#gCop1)"/></svg></a>
    <a href="#" class="tb-app d-flex align-items-center justify-content-center" aria-label="Python"><svg class="i30" viewBox="0 0 30 30"><path d="M1 0h17l6 6v24H1z" fill="#f1f1f1"/><path d="M4 5h12M4 8h14M4 11h16M4 14h12M4 17h10M4 20h10M4 23h12M4 26h14" stroke="#aaa" stroke-dasharray="2 1"/><path d="M20 11h4a3 3 0 0 1 3 3v3a3 3 0 0 1-3 3h-4a3 3 0 0 0-2 3h-1a3 3 0 0 1-3-3v-1a3 3 0 0 1 3-3h6v-1h-4v-2a2 2 0 0 1 1-2z" fill="#3a78ab"/><path d="M23 27h-2a3 3 0 0 1-3-3 3 3 0 0 1 3-3h4a3 3 0 0 0 3-3v-3a3 3 0 0 1 2 3v2a4 4 0 0 1-3 4h-3v1z" fill="#fbc93d"/></svg></a>
    <a href="#" class="tb-app run front d-flex align-items-center justify-content-center text-decoration-none" aria-label="Chrome"><svg class="i30" viewBox="0 0 48 48"><circle cx="24" cy="24" r="23" fill="#34a853"/><path d="M4 12.500A23 23 0 0 1 44 12.500H24L14 30z" fill="#ea4335"/><path d="M44 12.500A23 23 0 0 1 24 47l10-17.500a11.500 11.500 0 0 0 0-11.500l-10-5.500z" fill="#fbbc04"/><circle cx="24" cy="24" r="11.500" fill="#fff"/><circle cx="24" cy="24" r="9" fill="#4285f4"/></svg><span class="avatar app-badge d-flex align-items-center justify-content-center">Д</span></a>
    <a href="#" class="tb-app run d-flex align-items-center justify-content-center" aria-label="Проводник"><svg class="i30" viewBox="0 0 30 30"><path d="M0 3a1 1 0 0 1 1-1h9l3 3h-1v6H0z" fill="#d9970a"/><path d="M0 7h11l2-2h16a1 1 0 0 1 1 1v22a1 1 0 0 1-1 1H1a1 1 0 0 1-1-1z" fill="url(#gFold)"/><path d="M5 29v-5a3 3 0 0 1 3-3h14a3 3 0 0 1 3 3v5z" fill="#1173c4"/><path d="M8 25h14" stroke="#0b4f92" stroke-width="1.500"/></svg></a>
    <a href="#" class="tb-app d-flex align-items-center justify-content-center" aria-label="Telegram"><svg class="i30" viewBox="0 0 30 30"><circle cx="15" cy="15" r="13.500" fill="url(#gTg)"/><path d="M7 14.700l14-5.600c.7-.2 1.200.2 1 1.100l-2.200 10.600c-.2.800-.7.900-1.300.5l-3.600-2.600-1.800 1.800c-.4.400-.8.200-.8-.3v-3l6.300-5.700-8 5-3.400-1c-.8-.2-.8-.6-.2-.8z" fill="#fff"/></svg></a>
    <a href="#" class="tb-app run d-flex align-items-center justify-content-center" aria-label="Discord"><svg class="i30" viewBox="0 0 30 30"><circle cx="15" cy="15" r="15" fill="#5865f2"/><svg x="6" y="6" width="18" height="18" viewBox="0 0 24 24"><path fill="#fff" d="M20.317 4.3698a19.7913 19.7913 0 00-4.8851-1.5152.0741.0741 0 00-.0785.0371c-.211.3753-.4447.8648-.6083 1.2495-1.8447-.2762-3.68-.2762-5.4868 0-.1636-.3933-.4058-.8742-.6177-1.2495a.077.077 0 00-.0785-.037 19.7363 19.7363 0 00-4.8852 1.515.0699.0699 0 00-.0321.0277C.5334 9.0458-.319 13.5799.0992 18.0578a.0824.0824 0 00.0312.0561c2.0528 1.5076 4.0413 2.4228 5.9929 3.0294a.0777.0777 0 00.0842-.0276c.4616-.6304.8731-1.2952 1.226-1.9942a.076.076 0 00-.0416-.1057c-.6528-.2476-1.2743-.5495-1.8722-.8923a.077.077 0 01-.0076-.1277c.1258-.0943.2517-.1923.3718-.2914a.0743.0743 0 01.0776-.0105c3.9278 1.7933 8.18 1.7933 12.0614 0a.0739.0739 0 01.0785.0095c.1202.099.246.1981.3728.2924a.077.077 0 01-.0066.1276 12.2986 12.2986 0 01-1.873.8914.0766.0766 0 00-.0407.1067c.3604.698.7719 1.3628 1.225 1.9932a.076.076 0 00.0842.0286c1.961-.6067 3.9495-1.5219 6.0023-3.0294a.077.077 0 00.0313-.0552c.5004-5.177-.8382-9.6739-3.5485-13.6604a.061.061 0 00-.0312-.0286zM8.02 15.3312c-1.1825 0-2.1569-1.0857-2.1569-2.419 0-1.3332.9555-2.4189 2.157-2.4189 1.2108 0 2.1757 1.0952 2.1568 2.419 0 1.3332-.9555 2.4189-2.1569 2.4189zm7.9748 0c-1.1825 0-2.1569-1.0857-2.1569-2.419 0-1.3332.9554-2.4189 2.1569-2.4189 1.2108 0 2.1757 1.0952 2.1568 2.419 0 1.3332-.946 2.4189-2.1568 2.4189Z"/></svg></svg></a>
    <a href="#" class="tb-app run d-flex align-items-center justify-content-center" aria-label="Палитра"><svg class="i30" viewBox="0 0 30 30"><g stroke-width="8" fill="none"><path d="M8 8a10 10 0 0 1 9-4" stroke="#8fd6b0"/><path d="M15.500 5a10.500 10.500 0 0 1 8 4" stroke="#e86af0"/><path d="M21.500 6.500a10.500 10.500 0 0 1 3.500 10" stroke="#e020d0"/><path d="M25 14a10.500 10.500 0 0 1-5 9.500" stroke="#f0285a"/><path d="M22 22a10.500 10.500 0 0 1-10 3" stroke="#ff8a1c"/><path d="M15 25.300a10.500 10.500 0 0 1-8-4" stroke="#e8ea1a"/><path d="M9 23a10.500 10.500 0 0 1-4-9.500" stroke="#28c83c"/><path d="M4.700 16A10.500 10.500 0 0 1 9 7" stroke="#2a9a78"/></g><circle cx="15" cy="15" r="10" fill="url(#gGlow)"/></svg></a>
    <a href="#" class="tb-app run d-flex align-items-center justify-content-center" aria-label="Word"><svg class="i30" viewBox="0 0 30 30"><path d="M7 1h18a3 3 0 0 1 3 3v22a3 3 0 0 1-3 3H9a4 4 0 0 1-4-4V4a3 3 0 0 1 2-3z" fill="url(#gWord)"/><path d="M14 13h14v7H6c2-5 4-7 8-7z" fill="#1c63dc"/><rect y="15" width="12" height="12" rx="2" fill="#123f9c"/><text x="6" y="25" font-size="10" font-weight="700" fill="#fff" text-anchor="middle" font-family="Open Sans, sans-serif">W</text></svg></a>
    <a href="#" class="tb-app run d-flex align-items-center justify-content-center" aria-label="Viber"><svg class="i30" viewBox="0 0 30 30"><path d="M15 1c9 0 13 3 13 12s-4 12-13 12l-1 .2L9 30v-6C4 22 2 19 2 13 2 4 6 1 15 1z" fill="#7360f2" stroke="#fff" stroke-width="2"/><path d="M9.500 7.500c1-.8 2-.5 2.800.8 1 1.500 1 2 .2 2.900-.6.700-.5 1.400.6 3 1.200 1.600 2 2.200 2.900 1.800 1.200-.7 1.800-.4 3.200.8 1.300 1 1.400 1.800.5 2.900-1.200 1.500-2.600 1.300-5.200-.4-3.200-2-5.400-5-6-8-.3-1.700 0-3 1-3.800z" fill="#fff"/><path d="M15.500 6c4 .2 6.500 3 6.500 7M15.800 8.500c2.300.2 3.700 1.700 3.900 4M16 11c1 .1 1.300.7 1.400 1.600" fill="none" stroke="#fff" stroke-width="1.100"/></svg></a>
  </div>
  <div class="tb-side tray d-flex align-items-center justify-content-end">
    <svg class="i16" viewBox="0 0 16 16"><path d="M2 11l6-6 6 6" fill="none" stroke="#fff" stroke-width="1.800"/></svg>
    <svg class="i20" viewBox="0 0 20 20"><path d="M4.500 16a4 4 0 0 1 0-8A5.500 5.500 0 0 1 15 7a4.500 4.500 0 0 1 .5 9z" fill="#868686"/><path d="M2 2l17 17" stroke="#fff" stroke-width="1.600"/></svg>
    <svg class="i20" viewBox="0 0 20 20"><path d="M18.500 1L14 19l-4-7-9-2z" fill="none" stroke="#f09a7c" stroke-width="1.600" stroke-linejoin="round"/></svg>
    <span>РУС</span>
    <div class="tray-icons d-flex">
      <svg class="i20" viewBox="0 0 20 20" fill="none" stroke="#fff" stroke-width="1.600"><path d="M1 8a12.500 12.500 0 0 1 18 0M3.800 11a8.500 8.500 0 0 1 12.400 0M6.500 13.800a5 5 0 0 1 7 0"/><circle cx="10" cy="16.500" r="1.200" fill="#fff"/></svg>
      <svg class="i20" viewBox="0 0 20 20" fill="none" stroke="#fff" stroke-width="1.500"><path d="M1 7.500h3.500L9 3.500v13l-4.500-4H1z"/><path d="M11.500 7.500a3.500 3.500 0 0 1 0 5M13.700 5.300a6.500 6.500 0 0 1 0 9.400"/><path d="M16 3a10 10 0 0 1 0 14" stroke="#666"/></svg>
      <svg class="i20" viewBox="0 0 20 20"><rect x="2" y="5" width="15" height="11" rx="2.500" fill="none" stroke="#fff" stroke-width="1.500"/><path d="M18 8.500h1.500v4H18zM5 12l5-5h5v6.500H4z" fill="#fff"/><path d="M3.500 0L0 5.500h2.500L2 9l4-5.500H3.800z" fill="#fff"/></svg>
    </div>
    <div class="two-line text-end">17:33<br>02.03.2026</div>
  </div>
</footer>

<div class="activation ui-font"><div class="big">Активация Windows</div>Чтобы активировать Windows, перейдите в раздел<br>"Параметры".</div>
<svg class="pointer" width="14" height="20" viewBox="0 0 14 20" aria-hidden="true"><path d="M1 1v15l3.500-3.300 2.200 5.300 2.500-1-2.200-5.200H12z" fill="#fff" stroke="#111"/></svg>
</body>
</html>
